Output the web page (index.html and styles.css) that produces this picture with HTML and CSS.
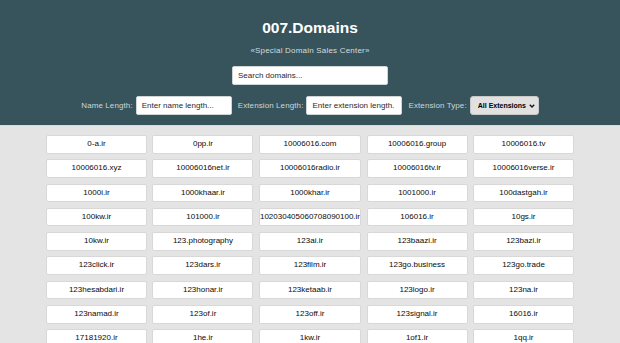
FILE: index.html
```html
<!DOCTYPE html>
<html lang="en">
<head>
    <meta charset="UTF-8">
    <meta name="viewport" content="width=device-width, initial-scale=1.0">
    <title>007.Domains</title>
    <link rel="stylesheet" href="styles.css">
</head>
<body>
    <header class="header">
        <h1>007.Domains</h1>
        <p class="subtitle">«Special Domain Sales Center»</p>

        <input type="text" class="search" placeholder="Search domains...">

        <div class="filters">
            <label for="name-length">Name Length:</label>
            <input type="text" id="name-length" placeholder="Enter name length...">
            <label for="ext-length">Extension Length:</label>
            <input type="text" id="ext-length" placeholder="Enter extension length.">
            <label for="ext-type">Extension Type:</label>
            <select id="ext-type">
                <option>All Extensions</option>
                <option>.ir</option>
                <option>.com</option>
            </select>
        </div>
    </header>

    <div class="domain-list">
        <div class="domain">0-a.ir</div>
        <div class="domain">0pp.ir</div>
        <div class="domain">10006016.com</div>
        <div class="domain">10006016.group</div>
        <div class="domain">10006016.tv</div>

        <div class="domain">10006016.xyz</div>
        <div class="domain">10006016net.ir</div>
        <div class="domain">10006016radio.ir</div>
        <div class="domain">10006016tv.ir</div>
        <div class="domain">10006016verse.ir</div>

        <div class="domain">1000i.ir</div>
        <div class="domain">1000khaar.ir</div>
        <div class="domain">1000khar.ir</div>
        <div class="domain">1001000.ir</div>
        <div class="domain">100dastgah.ir</div>

        <div class="domain">100kw.ir</div>
        <div class="domain">101000.ir</div>
        <div class="domain">102030405060708090100.ir</div>
        <div class="domain">106016.ir</div>
        <div class="domain">10gs.ir</div>

        <div class="domain">10kw.ir</div>
        <div class="domain">123.photography</div>
        <div class="domain">123ai.ir</div>
        <div class="domain">123baazi.ir</div>
        <div class="domain">123bazi.ir</div>

        <div class="domain">123click.ir</div>
        <div class="domain">123dars.ir</div>
        <div class="domain">123film.ir</div>
        <div class="domain">123go.business</div>
        <div class="domain">123go.trade</div>

        <div class="domain">123hesabdari.ir</div>
        <div class="domain">123honar.ir</div>
        <div class="domain">123ketaab.ir</div>
        <div class="domain">123logo.ir</div>
        <div class="domain">123na.ir</div>

        <div class="domain">123namad.ir</div>
        <div class="domain">123of.ir</div>
        <div class="domain">123off.ir</div>
        <div class="domain">123signal.ir</div>
        <div class="domain">16016.ir</div>

        <div class="domain">17181920.ir</div>
        <div class="domain">1he.ir</div>
        <div class="domain">1kw.ir</div>
        <div class="domain">1of1.ir</div>
        <div class="domain">1qq.ir</div>
    </div>
</body>
</html>
```

FILE: styles.css
```css
body {
    margin: 0;
    font-family: 'Liberation Sans', Arial, Helvetica, sans-serif;
    background-color: #e4e4e4;
    color: #111;
}

.header {
    background-color: #37545c;
    text-align: center;
    padding: 18px 0 10px;
    border-bottom: 1px solid #d8dcdc;
}

h1 {
    margin: 0;
    font-size: 15.5px;
    line-height: 20px;
    color: #ffffff;
}

.subtitle {
    margin: 8px 0 10px;
    font-size: 8px;
    line-height: 10px;
    color: #d4dcdd;
    letter-spacing: 0.2px;
}

input[type="text"],
select {
    box-sizing: border-box;
    height: 19px;
    border: 1px solid #cfd4d5;
    border-radius: 2px;
    background-color: #fff;
    font-family: inherit;
    font-size: 8px;
    color: #111;
    padding: 0 5px;
}

input::placeholder {
    color: #2a2a2a;
}

.search {
    display: block;
    width: 156px;
    margin: 0 auto;
}

.filters {
    display: flex;
    justify-content: center;
    align-items: center;
    margin-top: 11px;
}

.filters label {
    font-size: 8px;
    color: #cdd6d8;
    margin: 0 3px 0 6px;
    letter-spacing: 0.1px;
}

.filters label:first-child {
    margin-left: 0;
}

.filters input[type="text"] {
    width: 96px;
}

.filters select {
    width: 69px;
    appearance: none;
    -webkit-appearance: none;
    background-color: #e1e1e1;
    border-color: #c8c8c8;
    border-radius: 3px;
    font-size: 7px;
    font-weight: bold;
    color: #000;
    padding: 0 4px 0 7px;
    background-image: url("data:image/svg+xml,%3Csvg xmlns='http://www.w3.org/2000/svg' width='6' height='4' viewBox='0 0 6 4'%3E%3Cpath d='M0.8 0.8 L3 3 L5.2 0.8' fill='none' stroke='%23111' stroke-width='1.3'/%3E%3C/svg%3E");
    background-repeat: no-repeat;
    background-position: right 3px center;
}

.domain-list {
    display: grid;
    grid-template-columns: repeat(5, 1fr);
    gap: 5.8px 5.5px;
    width: 528px;
    margin: 9px auto 0;
}

.domain {
    background-color: #fff;
    border: 1px solid #d8d8d8;
    border-radius: 2px;
    font-size: 8px;
    line-height: 16.5px;
    text-align: center;
    white-space: nowrap;
    color: #0a0a0a;
}
```
